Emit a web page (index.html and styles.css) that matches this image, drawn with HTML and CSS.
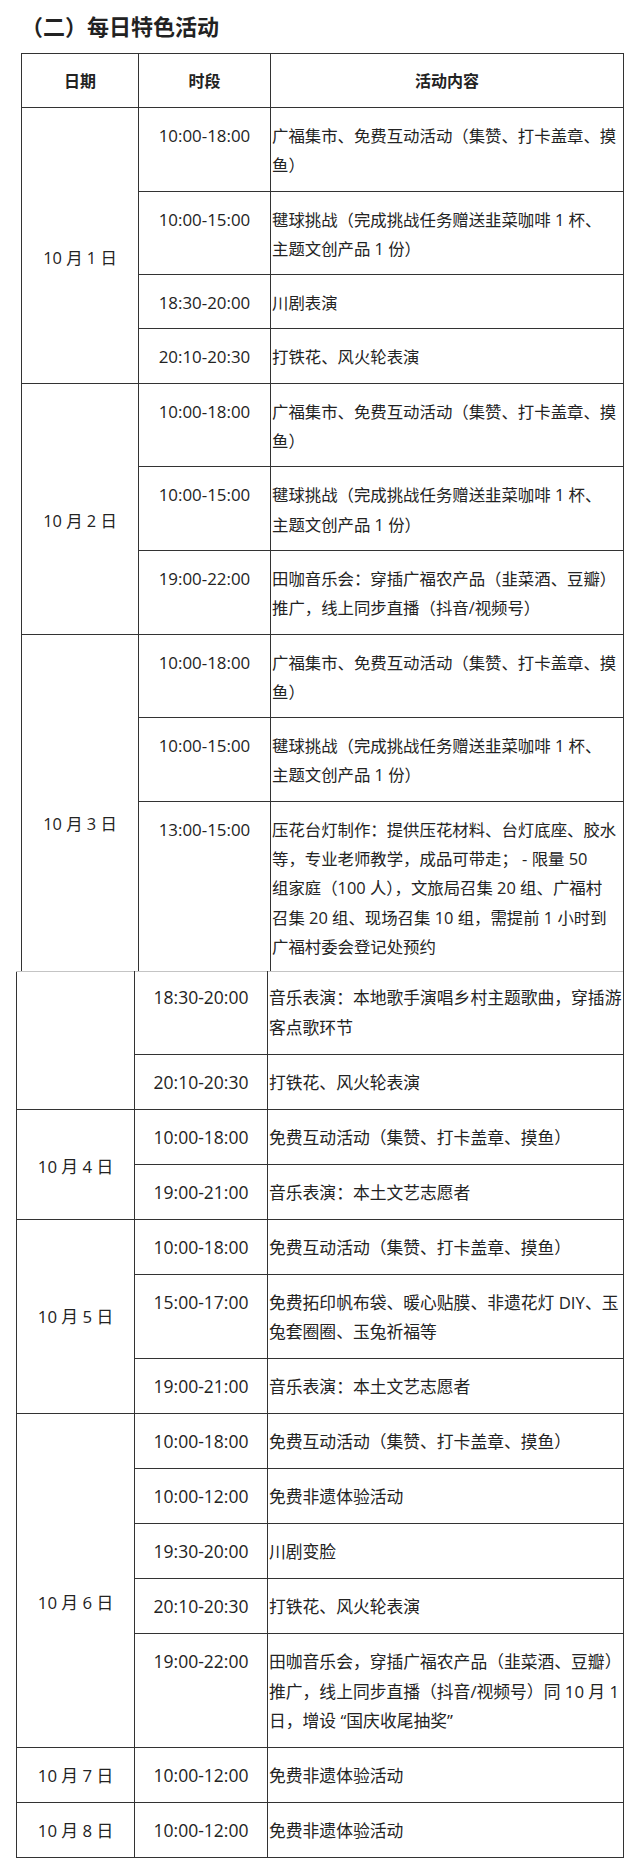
FILE: index.html
```html
<!DOCTYPE html>
<html lang="zh-CN">
<head>
<meta charset="utf-8">
<title>每日特色活动</title>
<link rel="stylesheet" href="styles.css">
</head>
<body>
<div class="page">
  <h2 class="title">（二）每日特色活动</h2>

  <table class="sched sched-top">
    <colgroup><col class="c-date"><col class="c-time"><col class="c-act"></colgroup>
    <thead>
      <tr><th>日期</th><th>时段</th><th>活动内容</th></tr>
    </thead>
    <tbody>
      <tr><td class="date date-1" rowspan="4">10 月 1 日</td><td class="time">10:00-18:00</td><td class="act">广福集市、免费互动活动（集赞、打卡盖章、摸<br>鱼）</td></tr>
      <tr><td class="time">10:00-15:00</td><td class="act">毽球挑战（完成挑战任务赠送韭菜咖啡 1 杯、<br>主题文创产品 1 份）</td></tr>
      <tr><td class="time">18:30-20:00</td><td class="act">川剧表演</td></tr>
      <tr><td class="time">20:10-20:30</td><td class="act">打铁花、风火轮表演</td></tr>

      <tr><td class="date date-2" rowspan="3">10 月 2 日</td><td class="time">10:00-18:00</td><td class="act">广福集市、免费互动活动（集赞、打卡盖章、摸<br>鱼）</td></tr>
      <tr><td class="time">10:00-15:00</td><td class="act">毽球挑战（完成挑战任务赠送韭菜咖啡 1 杯、<br>主题文创产品 1 份）</td></tr>
      <tr><td class="time">19:00-22:00</td><td class="act">田咖音乐会：穿插广福农产品（韭菜酒、豆瓣）<br>推广，线上同步直播（抖音/视频号）</td></tr>

      <tr><td class="date date-3 cut-bottom" rowspan="3">10 月 3 日</td><td class="time">10:00-18:00</td><td class="act">广福集市、免费互动活动（集赞、打卡盖章、摸<br>鱼）</td></tr>
      <tr><td class="time">10:00-15:00</td><td class="act">毽球挑战（完成挑战任务赠送韭菜咖啡 1 杯、<br>主题文创产品 1 份）</td></tr>
      <tr><td class="time cut-bottom">13:00-15:00</td><td class="act cut-bottom">压花台灯制作：提供压花材料、台灯底座、胶水<br>等，专业老师教学，成品可带走； - 限量 50<br>组家庭（100 人），文旅局召集 20 组、广福村<br>召集 20 组、现场召集 10 组，需提前 1 小时到<br>广福村委会登记处预约</td></tr>
    </tbody>
  </table>

  <table class="sched sched-bottom">
    <colgroup><col class="c-date"><col class="c-time"><col class="c-act"></colgroup>
    <tbody>
      <tr class="cut-top"><td class="date" rowspan="2"></td><td class="time">18:30-20:00</td><td class="act">音乐表演：本地歌手演唱乡村主题歌曲，穿插游<br>客点歌环节</td></tr>
      <tr><td class="time">20:10-20:30</td><td class="act">打铁花、风火轮表演</td></tr>

      <tr><td class="date date-4" rowspan="2">10 月 4 日</td><td class="time">10:00-18:00</td><td class="act">免费互动活动（集赞、打卡盖章、摸鱼）</td></tr>
      <tr><td class="time">19:00-21:00</td><td class="act">音乐表演：本土文艺志愿者</td></tr>

      <tr><td class="date date-5" rowspan="3">10 月 5 日</td><td class="time">10:00-18:00</td><td class="act">免费互动活动（集赞、打卡盖章、摸鱼）</td></tr>
      <tr><td class="time">15:00-17:00</td><td class="act">免费拓印帆布袋、暖心贴膜、非遗花灯 DIY、玉<br>兔套圈圈、玉兔祈福等</td></tr>
      <tr><td class="time">19:00-21:00</td><td class="act">音乐表演：本土文艺志愿者</td></tr>

      <tr><td class="date date-6" rowspan="5">10 月 6 日</td><td class="time">10:00-18:00</td><td class="act">免费互动活动（集赞、打卡盖章、摸鱼）</td></tr>
      <tr><td class="time">10:00-12:00</td><td class="act">免费非遗体验活动</td></tr>
      <tr><td class="time">19:30-20:00</td><td class="act">川剧变脸</td></tr>
      <tr><td class="time">20:10-20:30</td><td class="act">打铁花、风火轮表演</td></tr>
      <tr><td class="time">19:00-22:00</td><td class="act">田咖音乐会，穿插广福农产品（韭菜酒、豆瓣）<br>推广，线上同步直播（抖音/视频号）同 10 月 1<br>日，增设 “国庆收尾抽奖”</td></tr>

      <tr><td class="date date-single">10 月 7 日</td><td class="time">10:00-12:00</td><td class="act">免费非遗体验活动</td></tr>
      <tr><td class="date date-single">10 月 8 日</td><td class="time">10:00-12:00</td><td class="act">免费非遗体验活动</td></tr>
    </tbody>
  </table>
</div>
</body>
</html>
```

FILE: styles.css
```css
* { box-sizing: border-box; }

html, body {
  margin: 0;
  padding: 0;
  background: #ffffff;
}

body {
  font-family: "Open Sans", "Noto Sans CJK SC", sans-serif;
  color: #232323;
}

.page {
  width: 640px;
  height: 1870px;
  overflow: hidden;
}

.title {
  margin: 0 0 3px 21px;
  font-family: "Noto Sans CJK SC", sans-serif;
  font-weight: 700;
  font-size: 22px;
  line-height: 50px;
  color: #222222;
}

.sched {
  border-collapse: collapse;
  table-layout: fixed;
}

.sched td,
.sched th {
  border: 1px solid #333333;
  white-space: nowrap;
  vertical-align: top;
  font-weight: 400;
}

.sched th {
  font-family: "Noto Sans CJK SC", sans-serif;
  font-weight: 700;
  font-size: 16px;
  line-height: 29px;
  padding: 12px 0;
  text-align: center;
  vertical-align: middle;
}

/* top fragment */
.sched-top {
  margin-left: 21px;
  width: 602px;
  font-size: 16.4px;
}
.sched-top .c-date { width: 117px; }
.sched-top .c-time { width: 132px; }
.sched-top .c-act  { width: 353px; }

.sched-top td {
  line-height: 29.3px;
  padding: 13px 0 11px;
}

.sched-top td.time { font-size: 16.9px; }

.sched-top td.cut-bottom {
  padding-bottom: 10px;
  border-bottom: none;
}

/* bottom fragment */
.sched-bottom {
  margin-left: 16px;
  width: 607px;
  font-size: 16.8px;
}
.sched-bottom .c-date { width: 118px; }
.sched-bottom .c-time { width: 133px; }
.sched-bottom .c-act  { width: 356px; }

.sched-bottom td {
  line-height: 29.5px;
  padding: 13px 0 11.5px;
}

.sched-bottom td.time { font-size: 17.5px; }

.sched-bottom .cut-top td {
  padding-top: 11px;
  border-top-color: #c4c4c4;
}

/* cells */
.sched td.time {
  text-align: center;
}

.sched td.act {
  text-align: left;
  padding-left: 1px;
}

.sched td.date {
  text-align: center;
  vertical-align: middle;
  padding-bottom: 0;
  padding-top: 0;
}

.sched td.date-1 { padding-top: 24px; }
.sched td.date-2 { padding-top: 24px; }
.sched td.date-3 { padding-top: 41px; }
.sched td.date-4 { padding-top: 6px; }
.sched td.date-5 { padding-top: 0; }
.sched td.date-6 { padding-top: 45px; }
.sched td.date-single { padding-top: 2px; }
```
